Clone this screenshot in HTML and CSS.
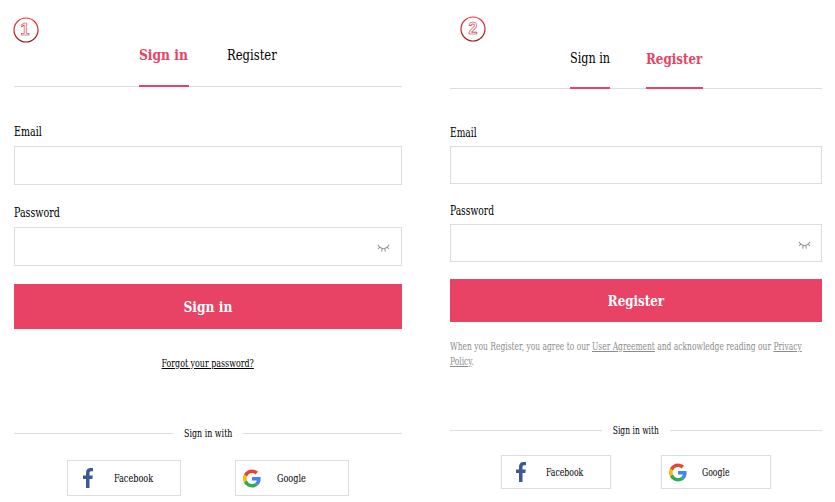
FILE: index.html
```html
<!DOCTYPE html>
<html lang="en">
<head>
    <meta charset="UTF-8">
    <meta name="viewport" content="width=device-width, initial-scale=1.0">
    <title>Sign in / Register</title>
    <link rel="stylesheet" href="styles.css">
</head>
<body>
    <svg class="defs" width="0" height="0">
        <defs>
            <linearGradient id="red" gradientUnits="userSpaceOnUse" x1="0" y1="0" x2="0" y2="26">
                <stop offset="0" stop-color="#ff3038"/>
                <stop offset="1" stop-color="#8a1a1e"/>
            </linearGradient>
            <symbol id="eye" viewBox="0 0 14 8">
                <path d="M1 .5C4 5.800 10 5.800 13 .5M3 3.300L1 5M5.600 4.500L5 7.800M8.400 4.500L9 7.800M11 3.300L13 5" fill="none" stroke="#999" stroke-width="1.200"/>
            </symbol>
            <symbol id="facebook" viewBox="0 0 10 20">
                <path d="M3 20V11H0V7.600H3V5C3 1.800 4.800 0 7.400 0H10V3.300H8.200C6.900 3.300 6.500 4 6.500 5.200V7.600H9.800L9.300 11H6.500V20Z" fill="#3b5998"/>
            </symbol>
            <symbol id="google" viewBox="0 0 48 48">
                <path fill="#EA4335" d="M24 9.500c3.500 0 6.700 1.200 9.200 3.600l6.900-6.900C35.900 2.400 30.500 0 24 0 14.600 0 6.500 5.400 2.600 13.200l8 6.200C12.400 13.700 17.700 9.500 24 9.500z"/>
                <path fill="#4285F4" d="M47 24.500c0-1.600-.2-3.100-.4-4.500H24v9h12.900c-.6 3-2.200 5.500-4.700 7.200l7.700 6C44.400 38 47 31.800 47 24.500z"/>
                <path fill="#FBBC05" d="M10.500 28.600a14.500 14.500 0 0 1 0-9.200l-8-6.200a24 24 0 0 0 0 21.600z"/>
                <path fill="#34A853" d="M24 48c6.500 0 11.900-2.100 15.900-5.800l-7.700-6c-2.200 1.500-4.900 2.300-8.200 2.300-6.300 0-11.600-4.200-13.500-9.900l-8 6.200C6.500 42.600 14.600 48 24 48z"/>
            </symbol>
        </defs>
    </svg>

    <div class="page">
        <div class="panel signin">
            <svg class="badge" viewBox="0 0 26 26">
                <circle cx="13" cy="13" r="12" fill="none" stroke="url(#red)" stroke-width="1.2"/>
                <text x="12" y="18" text-anchor="middle">1</text>
            </svg>
            <div class="tabs">
                <a class="tab active"><span>Sign in</span></a>
                <a class="tab"><span>Register</span></a>
            </div>
            <label>Email</label>
            <div class="field"></div>
            <label>Password</label>
            <div class="field"><svg class="eye"><use href="#eye"/></svg></div>
            <button><span>Sign in</span></button>
            <a class="forgot">Forgot your password?</a>
            <div class="divider"><span>Sign in with</span></div>
            <div class="social">
                <div class="provider facebook"><svg><use href="#facebook"/></svg><span>Facebook</span></div>
                <div class="provider google"><svg><use href="#google"/></svg><span>Google</span></div>
            </div>
        </div>

        <div class="panel register">
            <svg class="badge" viewBox="0 0 26 26">
                <circle cx="13" cy="13" r="12" fill="none" stroke="url(#red)" stroke-width="1.2"/>
                <text x="13" y="18" text-anchor="middle">2</text>
            </svg>
            <div class="tabs">
                <a class="tab underlined"><span>Sign in</span></a>
                <a class="tab active"><span>Register</span></a>
            </div>
            <label>Email</label>
            <div class="field"></div>
            <label>Password</label>
            <div class="field"><svg class="eye"><use href="#eye"/></svg></div>
            <button><span>Register</span></button>
            <p class="terms">When you Register, you agree to our <a>User Agreement</a> and acknowledge reading our <a>Privacy</a><br><a>Policy</a>.</p>
            <div class="divider"><span>Sign in with</span></div>
            <div class="social">
                <div class="provider facebook"><svg><use href="#facebook"/></svg><span>Facebook</span></div>
                <div class="provider google"><svg><use href="#google"/></svg><span>Google</span></div>
            </div>
        </div>
    </div>
</body>
</html>
```
FILE: styles.css
```css
* {
    box-sizing: border-box;
}
body {
    margin: 0;
    height: 502px;
    overflow: hidden;
    background-color: white;
    color: #000;
    font-family: "DejaVu Serif Condensed", "DejaVu Serif", serif;
    font-stretch: condensed;
}
.defs {
    display: block;
}
.page {
    display: flex;
    gap: 48px;
    padding: 0 13px 0 14px;
}
.panel {
    display: flex;
    flex-direction: column;
}
.signin {
    width: 388px;
    padding-top: 17px;
}
.register {
    width: 372px;
    padding-top: 16px;
}
.badge {
    width: 26px;
    height: 26px;
    flex: none;
    margin-left: -1px;
}
.register .badge {
    margin-left: 10px;
}
.badge text {
    font: bold 16px "Liberation Sans", sans-serif;
    fill: white;
    stroke: url(#red);
    stroke-width: 0.6px;
}
.tabs {
    display: flex;
    justify-content: center;
    gap: 38px;
    height: 44px;
    border-bottom: 1px solid #ddd;
}
.tab {
    width: 50px;
    height: 44px;
    line-height: 24px;
    font-size: 15px;
    white-space: nowrap;
    border-bottom: 2px solid transparent;
}
.tab span {
    display: inline-block;
    transform: scaleX(0.86);
    transform-origin: left;
}
.tab.active {
    color: #e84264;
    font-weight: bold;
    border-color: #e84264;
}
.tab.active span {
    transform: scaleX(0.91);
}
.tab.underlined {
    border-color: #e84264;
}
.register .tabs {
    height: 47px;
    gap: 36px;
}
.register .tab {
    width: 40px;
    height: 47px;
    line-height: 33px;
    font-size: 14.5px;
}
.register .tab.active {
    width: 57px;
}
label {
    align-self: flex-start;
    height: 20px;
    line-height: 20px;
    margin-top: 35px;
    margin-bottom: 4px;
    font-size: 12.3px;
    transform: scaleX(0.86);
    transform-origin: left;
}
.field {
    display: flex;
    align-items: center;
    justify-content: flex-end;
    height: 39px;
    padding-right: 11px;
    border: 1px solid #ddd;
}
.field + label {
    margin-top: 18px;
}
.eye {
    width: 13px;
    height: 8px;
    margin-top: 3px;
}
button {
    height: 45px;
    margin-top: 18px;
    padding: 0;
    border: none;
    background-color: #e84264;
    color: white;
    font: inherit;
    font-size: 15px;
    font-weight: bold;
}
button span {
    display: inline-block;
    transform: scaleX(0.91);
}
.forgot {
    align-self: center;
    height: 20px;
    line-height: 20px;
    margin-top: 25px;
    font-size: 11px;
    white-space: nowrap;
    text-decoration: underline;
    transform: scaleX(0.8);
}
.divider {
    display: flex;
    align-items: center;
    gap: 5px;
    height: 20px;
    margin-top: 49px;
    font-size: 11px;
}
.divider span {
    transform: scaleX(0.8);
}
.divider::before,
.divider::after {
    content: "";
    flex: 1;
    height: 1px;
    background-color: #ddd;
}
.social {
    display: flex;
    justify-content: center;
    gap: 54px;
    margin-top: 17px;
}
.provider {
    display: flex;
    align-items: center;
    width: 114px;
    height: 36px;
    border: 1px solid #ddd;
    font-size: 11px;
}
.provider span {
    transform: scaleX(0.82);
    transform-origin: left;
}
.facebook svg {
    width: 10px;
    height: 20px;
    margin: 0 21px 0 15px;
}
.google svg {
    width: 18px;
    height: 19px;
    margin: 0 16px 0 7px;
}
.register label {
    margin-top: 34px;
    margin-bottom: 3px;
    font-size: 12px;
    transform: scaleX(0.845);
}
.register .field {
    height: 38px;
    padding-right: 10px;
}
.register .field + label {
    margin-top: 17px;
}
.register button {
    height: 43px;
    margin-top: 17px;
    font-size: 14.5px;
}
.terms {
    align-self: flex-start;
    margin: 17px 0 0;
    color: #8c8c8c;
    font-size: 10.5px;
    line-height: 15px;
    white-space: nowrap;
    transform: scaleX(0.797);
    transform-origin: left;
}
.terms a {
    text-decoration: underline;
}
.register .divider {
    margin-top: 51px;
    font-size: 10.5px;
}
.register .social {
    gap: 50px;
    margin-top: 15px;
}
.register .provider {
    width: 110px;
    height: 34px;
    font-size: 10.5px;
}
.register .facebook svg {
    margin: 0 20px 0 14px;
}
.register .google svg {
    margin-right: 15px;
}
```
